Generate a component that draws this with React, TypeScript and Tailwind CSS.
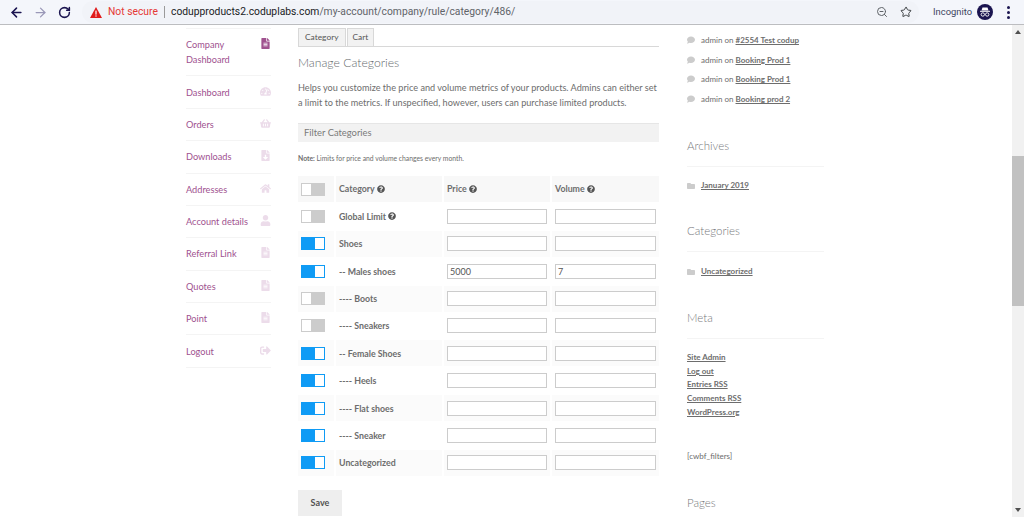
import { ArrowLeft, ArrowRight, RotateCw, ZoomOut, Star } from 'lucide-react'
import type { IconType } from 'react-icons'
import {
  FaComment,
  FaFileAlt,
  FaFileDownload,
  FaFolder,
  FaHome,
  FaQuestionCircle,
  FaShoppingBasket,
  FaSignOutAlt,
  FaTachometerAlt,
  FaUser,
} from 'react-icons/fa'

const navItems: { label: string; icon: IconType; strong?: boolean }[] = [
  { label: 'Company Dashboard', icon: FaFileAlt, strong: true },
  { label: 'Dashboard', icon: FaTachometerAlt },
  { label: 'Orders', icon: FaShoppingBasket },
  { label: 'Downloads', icon: FaFileDownload },
  { label: 'Addresses', icon: FaHome },
  { label: 'Account details', icon: FaUser },
  { label: 'Referral Link', icon: FaFileAlt },
  { label: 'Quotes', icon: FaFileAlt },
  { label: 'Point', icon: FaFileAlt },
  { label: 'Logout', icon: FaSignOutAlt },
]

const rows: { name: string; on: boolean; help?: boolean; price?: string; volume?: string }[] = [
  { name: 'Global Limit', on: false, help: true },
  { name: 'Shoes', on: true },
  { name: '-- Males shoes', on: true, price: '5000', volume: '7' },
  { name: '---- Boots', on: false },
  { name: '---- Sneakers', on: false },
  { name: '-- Female Shoes', on: true },
  { name: '---- Heels', on: true },
  { name: '---- Flat shoes', on: true },
  { name: '---- Sneaker', on: true },
  { name: 'Uncategorized', on: true },
]

const comments = ['#2554 Test codup', 'Booking Prod 1', 'Booking Prod 1', 'Booking prod 2']

function Toggle({ on }: { on: boolean }) {
  return (
    <div
      className={`flex h-[13px] w-[24px] border ${
        on ? 'justify-end border-[#0f9bf5] bg-[#0f9bf5]' : 'justify-start border-[#cccccc] bg-[#cccccc]'
      }`}
    >
      <div className="h-full w-[9px] bg-white" />
    </div>
  )
}

function Help() {
  return <FaQuestionCircle className="ml-[2px] inline text-[8px] text-[#555555]" />
}

function WidgetTitle({ children, className }: { children: string; className?: string }) {
  return (
    <div className={className}>
      <div className="text-[11.5px] font-light leading-[20px] text-[#77797c]">{children}</div>
      <div className="mt-[10px] border-b border-[#f4f4f4]" />
    </div>
  )
}

function Rss() {
  return <span className="underline decoration-dotted">RSS</span>
}

export default function App() {
  return (
    <div className="flex h-[517px] w-[1024px] flex-col overflow-hidden bg-white font-['Lato','Liberation_Sans',sans-serif]">
      <header className="flex h-[25px] shrink-0 items-center border-b border-[#bcbdc0] bg-[#f4f6fb] font-['Roboto','Liberation_Sans',sans-serif]">
        <ArrowLeft className="ml-[9px] h-[15px] w-[15px] text-[#1b1550]" strokeWidth={2.5} />
        <ArrowRight className="ml-[9px] h-[15px] w-[15px] text-[#9a98b8]" strokeWidth={2} />
        <RotateCw className="ml-[10px] h-[13px] w-[13px] text-[#1b1550]" strokeWidth={2.8} />
        <div className="ml-[11px] flex h-[22px] w-[837px] items-center rounded-full bg-[#f1f3f8] pl-[7px]">
          <svg viewBox="0 0 12 11" className="ml-[1px] h-[11px] w-[12px]">
            <path d="M6 0 L12 11 L0 11 Z" fill="#e01b1b" />
            <rect x="5.4" y="3.6" width="1.2" height="4" fill="#fff" />
            <rect x="5.4" y="8.4" width="1.2" height="1.2" fill="#fff" />
          </svg>
          <span className="ml-[6px] w-[49px] whitespace-nowrap text-[10.3px] text-[#e53935]">Not secure</span>
          <span className="ml-[7px] h-[12px] border-l border-[#9a9a9a]" />
          <span className="ml-[6px] whitespace-nowrap text-[10.3px] text-[#202124]">
            codupproducts2.coduplabs.com<span className="text-[#5f6368]">/my-account/company/rule/category/486/</span>
          </span>
          <ZoomOut className="ml-auto mr-[12px] h-[12px] w-[12px] text-[#5f6368]" />
          <Star className="mr-[7px] h-[12px] w-[12px] text-[#3c4043]" />
        </div>
        <span className="ml-[14px] w-[38px] whitespace-nowrap text-[9.4px] text-[#3c4560]">Incognito</span>
        <svg viewBox="0 0 16 16" className="ml-[6px] h-[16px] w-[16px]">
          <circle cx="8" cy="8" r="8" fill="#1b1550" />
          <path d="M4.5 6.5 L5.5 3.5 H10.5 L11.5 6.5 Z" fill="#fff" />
          <rect x="3" y="6.8" width="10" height="1" fill="#fff" />
          <circle cx="5.8" cy="10.5" r="1.7" fill="none" stroke="#fff" strokeWidth="0.9" />
          <circle cx="10.2" cy="10.5" r="1.7" fill="none" stroke="#fff" strokeWidth="0.9" />
        </svg>
        <div className="ml-[14px] flex flex-col gap-[2px]">
          <span className="h-[3px] w-[3px] rounded-full bg-[#1b1550]" />
          <span className="h-[3px] w-[3px] rounded-full bg-[#1b1550]" />
          <span className="h-[3px] w-[3px] rounded-full bg-[#1b1550]" />
        </div>
      </header>

      <div className="flex min-h-0 flex-1">
        <div className="flex min-w-0 flex-1 items-start pl-[186px]">
          <nav className="mt-[3px] w-[85px] shrink-0 border-t border-[#f4f4f4]">
            {navItems.map((item) => (
              <div
                key={item.label}
                className="flex items-start justify-between border-b border-[#f4f4f4] py-[8.2px] text-[9.2px] leading-[15px] text-[#a0528f]"
              >
                <span className={item.label === 'Company Dashboard' ? 'w-[60px]' : ''}>{item.label}</span>
                <item.icon className={`mt-[1px] text-[11px] ${item.strong ? 'text-[#a0528f]' : 'text-[#ecdcea]'}`} />
              </div>
            ))}
          </nav>

          <main className="ml-[27px] w-[361px] shrink-0">
            <div className="mt-[3px] flex gap-[1px] border-b border-[#d8d8d8]">
              <div className="border border-b-0 border-[#d8d8d8] bg-[#f2f2f2] px-[6px] text-[8.4px] leading-[17px] text-[#555555]">
                Category
              </div>
              <div className="border border-b-0 border-[#d8d8d8] bg-[#f2f2f2] px-[5px] text-[8.4px] leading-[17px] text-[#555555]">
                Cart
              </div>
            </div>
            <h1 className="mt-[7px] text-[12.2px] font-light leading-[18px] text-[#666a6e]">Manage Categories</h1>
            <p className="mt-[8px] text-[9.15px] leading-[15px] text-[#6d6d6d]">
              Helps you customize the price and volume metrics of your products. Admins can either set a limit to the
              metrics. If unspecified, however, users can purchase limited products.
            </p>
            <div className="mt-[13px] border-t border-[#e6e6e6] bg-[#f2f2f2] pl-[6px] text-[9.4px] leading-[18px] text-[#7a7a7a]">
              Filter Categories
            </div>
            <p className="mt-[11px] text-[6.8px] leading-[10px] text-[#6d6d6d]">
              <strong>Note:</strong> Limits for price and volume changes every month.
            </p>

            <div className="mt-[13px] grid grid-cols-[36px_106px_106px_107px] gap-x-[2px] gap-y-[1.4px] text-[8.8px] font-bold text-[#6d6d6d]">
              <div className="flex h-[26px] items-center bg-[#f8f8f8] pl-[3px]">
                <Toggle on={false} />
              </div>
              <div className="flex h-[26px] items-center bg-[#f8f8f8] pl-[3px]">
                Category <Help />
              </div>
              <div className="flex h-[26px] items-center bg-[#f8f8f8] pl-[3px]">
                Price <Help />
              </div>
              <div className="flex h-[26px] items-center bg-[#f8f8f8] pl-[3px]">
                Volume <Help />
              </div>
              {rows.map((row, i) => {
                const bg = i % 2 === 1 ? 'bg-[#fbfbfb]' : 'bg-white'
                return (
                  <div key={i} className="contents">
                    <div className={`flex h-[26px] items-center pl-[3px] ${bg}`}>
                      <Toggle on={row.on} />
                    </div>
                    <div className={`flex h-[26px] items-center pl-[3px] ${bg}`}>
                      {row.name}
                      {row.help && <Help />}
                    </div>
                    <div className={`flex h-[26px] items-center pl-[3px] ${bg}`}>
                      <input
                        readOnly
                        value={row.price ?? ''}
                        className="h-[15px] w-[100px] border border-[#cccccc] bg-white px-[2px] text-[9px] font-normal text-[#555555]"
                      />
                    </div>
                    <div className={`flex h-[26px] items-center pl-[3px] ${bg}`}>
                      <input
                        readOnly
                        value={row.volume ?? ''}
                        className="h-[15px] w-[101px] border border-[#cccccc] bg-white px-[2px] text-[9px] font-normal text-[#555555]"
                      />
                    </div>
                  </div>
                )
              })}
            </div>

            <button className="mt-[14px] h-[26px] w-[44px] bg-[#eeeeee] text-[9px] font-bold text-[#515151]">Save</button>
          </main>

          <aside className="ml-[28px] w-[137px] shrink-0 pt-[5px] text-[8px] text-[#6d6d6d]">
            <ul className="flex flex-col">
              {comments.map((c, i) => (
                <li key={i} className="flex h-[19.8px] items-center">
                  <FaComment className="mr-[6px] text-[8px] text-[#cccccc]" />
                  <span>admin on&nbsp;</span>
                  <a className="font-bold underline">{c}</a>
                </li>
              ))}
            </ul>
            <WidgetTitle className="mt-[27px]">Archives</WidgetTitle>
            <div className="mt-[13px] flex items-center leading-[11px]">
              <FaFolder className="mr-[6px] text-[8px] text-[#cccccc]" />
              <a className="font-bold underline">January 2019</a>
            </div>
            <WidgetTitle className="mt-[30px]">Categories</WidgetTitle>
            <div className="mt-[14px] flex items-center leading-[11px]">
              <FaFolder className="mr-[6px] text-[8px] text-[#cccccc]" />
              <a className="font-bold underline">Uncategorized</a>
            </div>
            <WidgetTitle className="mt-[31px]">Meta</WidgetTitle>
            <ul className="mt-[12px] flex flex-col font-bold leading-[13.6px]">
              <li className="h-[13.6px] underline">Site Admin</li>
              <li className="h-[13.6px] underline">Log out</li>
              <li className="h-[13.6px] underline">
                Entries <Rss />
              </li>
              <li className="h-[13.6px] underline">
                Comments <Rss />
              </li>
              <li className="h-[13.6px] underline">WordPress.org</li>
            </ul>
            <div className="mt-[31px] leading-[12px]">[cwbf_filters]</div>
            <div className="mt-[31px] text-[11.5px] font-light leading-[20px] text-[#77797c]">Pages</div>
          </aside>
        </div>

        <div className="flex w-[12px] shrink-0 flex-col bg-[#f1f1f1]">
          <div className="mx-auto mt-[5px] h-0 w-0 border-x-[3px] border-b-[4px] border-x-transparent border-b-[#505050]" />
          <div className="mt-[122px] h-[150px] bg-[#c1c1c1]" />
          <div className="mx-auto mb-[5px] mt-auto h-0 w-0 border-x-[3px] border-t-[4px] border-x-transparent border-t-[#505050]" />
        </div>
      </div>
    </div>
  )
}
